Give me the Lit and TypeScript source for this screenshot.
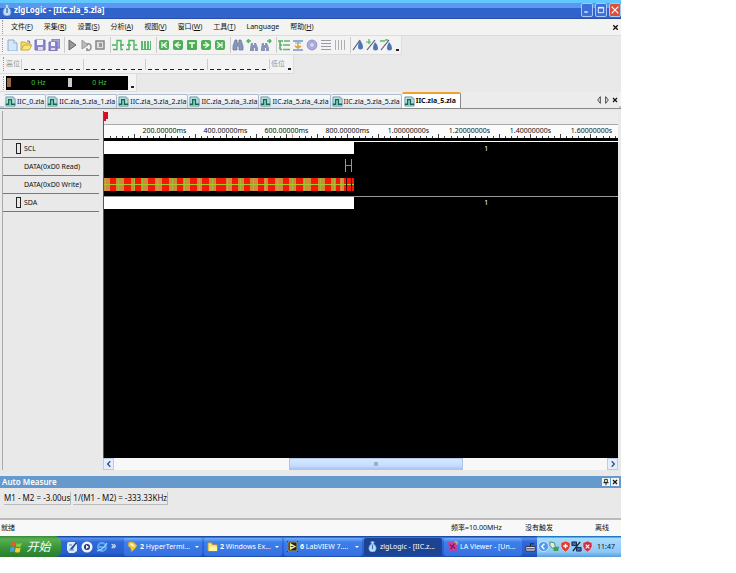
import { LitElement, html, css, svg, nothing } from "lit";
import { customElement, property, state } from "lit/decorators.js";
import { classMap } from "lit/directives/class-map.js";

const glyphs: Record<string, unknown> = {
  fresh: svg`<path d="M2 1h6l3 3v8H2z" fill="#d3e9fb" stroke="#8cacd0"/><path d="M8 1v3h3" fill="#fff" stroke="#8cacd0"/>`,
  open: svg`<path d="M1 11V3h4l1 1h4v2" fill="#f3dc6c" stroke="#c8a83c"/><path d="M1 11l3-5h8l-3 5z" fill="#f8e878" stroke="#c8a83c"/><path d="M7 2q3-1 3 2" fill="none" stroke="#66a"/>`,
  save: svg`<path d="M1 1h10v10H1z" fill="#8b86cc" stroke="#7471b8"/><path d="M3 1h6v5H3z" fill="#f4f4fb"/><path d="M4 8h5v3H4z" fill="#ddd"/>`,
  saveAll: svg`<path d="M4 0h8v9H4z" fill="#aaa6dc" stroke="#7471b8"/><path d="M1 3h8v9H1z" fill="#8b86cc" stroke="#7471b8"/><path d="M3 3h4v4H3z" fill="#f4f4fb"/><path d="M3 9h4v2H3z" fill="#ddd"/>`,
  play: svg`<path d="M3 1l7 5-7 5z" fill="#9a9a9a" stroke="#666"/>`,
  loop: svg`<path d="M2 1l6 5-6 4z" fill="#bbb" stroke="#999"/><path d="M7 5q4-1 4 3t-4 3m0-2v3" fill="none" stroke="#888" stroke-width="1.4"/>`,
  stop: svg`<path d="M2 2h8v8H2z" fill="#ddd" stroke="#888" stroke-width="1.5"/><path d="M5 4h3v4H5z" fill="#999"/>`,
  pulseA: svg`<path d="M1 10.500h4v-9h4v9h2" fill="none" stroke="#4cb45c" stroke-width="1.400"/><path d="M0 6h4M8 6h4" stroke="#4cb45c" stroke-width="1.400"/>`,
  pulseB: svg`<path d="M0 10.500h3v-9h5v9h4" fill="none" stroke="#4cb45c" stroke-width="1.400"/><path d="M1 6h4M9 6h2" stroke="#4cb45c" stroke-width="1.400"/>`,
  pulseC: svg`<path d="M1 2h2v8H1zM4 2h2v8H4zM7 2h2v8H7zM10 2h1v8h-1z" fill="#5cbc6c"/><path d="M1 10.500h10" stroke="#4cb45c"/>`,
  goFirst: svg`<rect x="1" y="1" width="10" height="10" rx="2" fill="#4fae55"/><path d="M4 3v6M9 3L5 6l4 3M6 6h3" fill="none" stroke="#eaffea" stroke-width="1.2"/>`,
  goPrev: svg`<rect x="1" y="1" width="10" height="10" rx="2" fill="#4fae55"/><path d="M7 3L3 6l4 3M4 6h5" fill="none" stroke="#eaffea" stroke-width="1.3"/>`,
  goTrig: svg`<rect x="1" y="1" width="10" height="10" rx="1" fill="#4fae55"/><path d="M3 4h6M6 4v5" fill="none" stroke="#eaffea" stroke-width="1.5"/>`,
  goNext: svg`<rect x="1" y="1" width="10" height="10" rx="2" fill="#4fae55"/><path d="M5 3l4 3-4 3M3 6h5" fill="none" stroke="#eaffea" stroke-width="1.3"/>`,
  goLast: svg`<rect x="1" y="1" width="10" height="10" rx="2" fill="#4fae55"/><path d="M8 3v6M3 3l4 3-4 3M3 6h3" fill="none" stroke="#eaffea" stroke-width="1.2"/>`,
  find: svg`<path d="M3 1h2v3h2V1h2l2 6v4H7V7H5v4H1V7z" fill="#8a96b8" stroke="#66749c" stroke-width=".7"/>`,
  findPrev: svg`<path d="M5 4h2v2h1V4h2l2 5v3H9V9H8v3H4V9z" fill="#8a96b8"/><path d="M5 2H1m2-2L1 2l2 2" fill="none" stroke="#4cb45c" stroke-width="1.3"/>`,
  findNext: svg`<path d="M2 4h2v2h1V4h2l2 5v3H6V9H5v3H1V9z" fill="#8a96b8"/><path d="M7 2h4M9 0l2 2-2 2" fill="none" stroke="#4cb45c" stroke-width="1.3"/>`,
  tree: svg`<path d="M0 2h5M2 2v8.500M2 6h2M2 10.500h2" fill="none" stroke="#4cb45c" stroke-width="1.600"/><path d="M6 2h6M5 6h7M5 10.500h7" stroke="#6cb070" stroke-width="1.300"/>`,
  insert: svg`<path d="M1 2h10M1 11h10" stroke="#6f96cc" stroke-width="1.6"/><path d="M6 3v6M3 7l3 2 3-2" fill="none" stroke="#e0a040" stroke-width="1.6"/><path d="M3 4h6" stroke="#7fb0dc"/>`,
  gear: svg`<circle cx="6" cy="6" r="4.6" fill="#b4b4e4" stroke="#9c9cd0" stroke-width="1.6"/><circle cx="6" cy="6" r="2.4" fill="#dcdcf4" stroke="#9a9ad0"/>`,
  lines: svg`<path d="M1 1.500h10M1 4.500h10M1 7.500h10M1 10.500h10" stroke="#9a9aa6"/>`,
  bars: svg`<path d="M1.500 1v10M4.500 1v10M7.500 1v10M10.500 1v10" stroke="#b0b0b0"/>`,
  probe: svg`<path d="M1 11L8 1" stroke="#557" stroke-width="1.2"/><path d="M8 1q3 4 3 7a2.4 2.4 0 0 1-5 0q0-3 2-7z" fill="#4a78b4"/>`,
  probeAdd: svg`<path d="M1 11L9 1" stroke="#557" stroke-width="1.2"/><path d="M9 3q3 3 3 6a2.3 2.3 0 0 1-5 0q0-3 2-6z" fill="#4a78b4"/><path d="M3 0v5M0 3h5" stroke="#4cb45c" stroke-width="1.2"/>`,
  probeDel: svg`<path d="M1 11L9 1" stroke="#557" stroke-width="1.2"/><path d="M9 3q3 3 3 6a2.3 2.3 0 0 1-5 0q0-3 2-6z" fill="#4a78b4"/><path d="M0 2h5M5 1l3 0" stroke="#58b868" stroke-width="1.4"/>`,
  wave: svg`<path d="M1 1h8l2 2v8H1z" fill="#b4dcdc" stroke="#6898ac"/><path d="M1 9h3V4h3v5h4" fill="none" stroke="#0c6c48" stroke-width="1.500"/><path d="M9 1v2h2" fill="#fff" stroke="#6898ac" stroke-width=".7"/>`,
  logo: svg`<path d="M4 1q2-1 4 0l-1 2q3 2 3 5 0 4-4 4t-4-4q0-3 3-5z" fill="#c4e0f8" stroke="#6c9cd8" stroke-width=".8"/><path d="M6 4v5" stroke="#3c74c0" stroke-width="1.400"/>`,
  winflag: svg`<path d="M1 3q2-2 4-.5L4.400 6Q2 5 .5 6z" fill="#f0582c"/><path d="M6 3q2 1 5-.5L10 6Q8 7 5.500 6z" fill="#86cc3c"/><path d="M.5 7q2-1 3.800 0L3.500 11Q2 10 0 11z" fill="#4c9cf0"/><path d="M5.300 7q2 1 4.500 0L9 11q-2 1-4.500 0z" fill="#f8cc34"/>`,
  ie: svg`<circle cx="6" cy="6" r="4" fill="none" stroke="#54acf8" stroke-width="2"/><path d="M3 6h6M1 10q6-1 10-8" fill="none" stroke="#a4d8ff" stroke-width="1.2"/>`,
  desktop: svg`<path d="M2 1h7l2 3v6l-3 2H3L1 9V3z" fill="#d8ecff"/><path d="M4 8l6-7 1 1-5 7z" fill="#2c4c80"/><path d="M3 4h3M3 9h5" stroke="#5080b8"/>`,
  media: svg`<circle cx="6" cy="6" r="5.500" fill="#f0f4fa"/><circle cx="6" cy="6" r="3" fill="#203c70"/><path d="M5 4l3 2-3 2z" fill="#fff"/>`,
  phone: svg`<path d="M2 1l5 0 4 4-2 3-4 4-1-4-3-3z" fill="#f0cc40" stroke="#b89028" stroke-width=".7"/><path d="M4 3l4 3" stroke="#fff" stroke-width="1.400"/>`,
  folder: svg`<path d="M1 11V2h4l1 2h5v7z" fill="#f8e470" stroke="#b89028" stroke-width=".8"/><path d="M3 6h8v5H2z" fill="#fff4a0"/>`,
  labview: svg`<path d="M0 0h12v12H0z" fill="#222"/><path d="M1 1h10v10H1z" fill="none" stroke="#c8c8a8"/><path d="M3 2l7 4-7 4z" fill="#f8e880"/><path d="M4 6h3" stroke="#333"/>`,
  viewer: svg`<path d="M1 1l4 1 3-2 4 4-2 3 2 4-5-1-5 2 0-5z" fill="#d83890"/><path d="M3 4l6 4M8 3L4 9" stroke="#501870" stroke-width="1.200"/><path d="M8 1h3v3" stroke="#f0e050" fill="none"/>`,
  keyboard: svg`<path d="M1 6h10v5H1z" fill="#dde" stroke="#334"/><path d="M2 8.500h8M6 6V3h4" fill="none" stroke="#223"/>`,
  chevron: svg`<circle cx="6" cy="6" r="5.500" fill="#4c98f4" stroke="#d0e8ff"/><path d="M7 3L4 6l3 3" fill="none" stroke="#fff" stroke-width="1.500"/>`,
  usb: svg`<path d="M1 1l5 1 1 5-3 1-3-3z" fill="#e0ecd8" stroke="#486"/><path d="M5 7l6-1-1 5H5z" fill="#3ca04c"/>`,
  shield: svg`<path d="M6 0l5 2v4q-1 4-5 6-4-2-5-6V2z" fill="#dc3c30" stroke="#fbd8d0" stroke-width=".7"/><path d="M6 3v5M3.500 5.500h5" stroke="#fff" stroke-width="1.500"/>`,
  network: svg`<path d="M1 1h5v4H1zM6 7h5v4H6z" fill="#3c68b0" stroke="#124"/><path d="M2 11l8-10" stroke="#123" stroke-width="1.500"/>`,
  alert: svg`<path d="M6 0l5 2v4q-1 4-5 6-4-2-5-6V2z" fill="#c83048" stroke="#fbd8d0" stroke-width=".7"/><path d="M4 4l4 4M8 4L4 8" stroke="#fff" stroke-width="1.300"/>`,
  min: svg`<path d="M2 9h5" stroke="#fff" stroke-width="2"/>`,
  max: svg`<path d="M2 2h8v8H2zM2 3h8" fill="none" stroke="#fff" stroke-width="1.300"/>`,
  close: svg`<path d="M1 1l10 10M11 1L1 11" stroke="#fff" stroke-width="1.800"/>`,
  cross: svg`<path d="M3 3l6 6M9 3L3 9" stroke="#111" stroke-width="1.800"/>`,
  left: svg`<path d="M8 1L4 6l4 5z" fill="none" stroke="#222" stroke-width="1.200"/>`,
  right: svg`<path d="M4 1l4 5-4 5z" fill="none" stroke="#222" stroke-width="1.200"/>`,
  scrollLeft: svg`<path d="M8 2L4 6l4 4" fill="none" stroke="#34507c" stroke-width="2"/>`,
  scrollRight: svg`<path d="M4 2l4 4-4 4" fill="none" stroke="#34507c" stroke-width="2"/>`,
  pin: svg`<path d="M4 2h4v5H4zM2 7h8M6 7v4" fill="none" stroke="#111" stroke-width="1.300"/>`,
};

@customElement("ui-icon")
class UiIcon extends LitElement {
  @property() name = "";
  static styles = css`
    :host { display: block; flex: none; width: 12px; height: 12px; }
    svg { display: block; width: 100%; height: 100%; }
  `;
  render() {
    return html`<svg viewBox="0 0 12 12" aria-hidden="true">${glyphs[this.name] ?? nothing}</svg>`;
  }
}

const menus = [
  ["文件", "F"], ["采集", "R"], ["设置", "S"], ["分析", "A"],
  ["视图", "V"], ["窗口", "W"], ["工具", "T"], ["Language", ""], ["帮助", "H"],
];

const toolGroups = [
  ["fresh", "open", "save", "saveAll"],
  ["play", "loop", "stop"],
  ["pulseA", "pulseB", "pulseC"],
  ["goFirst", "goPrev", "goTrig", "goNext", "goLast"],
  ["find", "findPrev", "findNext"],
  ["tree", "insert", "gear", "lines", "bars"],
  ["probe", "probeAdd", "probeDel"],
];

const files = [
  "IIC_0.zla", "IIC.zla_5.zla_1.zla", "IIC.zla_5.zla_2.zla", "IIC.zla_5.zla_3.zla",
  "IIC.zla_5.zla_4.zla", "IIC.zla_5.zla_5.zla", "IIC.zla_5.zla",
];

const times = [
  "200.00000ms", "400.00000ms", "600.00000ms", "800.00000ms",
  "1.00000000s", "1.20000000s", "1.40000000s", "1.60000000s",
];

/* [start, width] of each byte group on the write bus */
const bursts = [
  [0, 6], [12, 8], [27, 4], [37, 7], [51, 7], [65, 8], [79, 7], [93, 5], [105, 7],
  [122, 6], [134, 6], [146, 8], [160, 4], [171, 8], [185, 7], [199, 8], [214, 7],
  [227, 5], [236, 4],
];

const tasks = [
  { icon: "phone", count: "2", label: "HyperTermi...", on: false },
  { icon: "folder", count: "2", label: "Windows Ex...", on: false },
  { icon: "labview", count: "6", label: "LabVIEW 7....", on: false },
  { icon: "logo", count: "", label: "zlgLogic - [IIC.z...", on: true },
  { icon: "viewer", count: "", label: "LA Viewer - [Un...", on: false },
];

@customElement("wave-view")
class WaveView extends LitElement {
  static styles = css`
    :host { display: flex; flex-direction: column; min-width: 0; background: #000; border-left: 1px solid #a03838; }
    .head { box-sizing: border-box; height: 14px; background: #ececec; border-bottom: 1px solid #aaa; }
    .flag { display: block; width: 4px; height: 12px; }
    .ruler { display: flex; flex-direction: column; height: 13px; background: #fbfbfb; overflow: hidden; }
    .times { display: flex; height: 9px; padding-left: 30px; font-size: 7px; line-height: 12px; }
    .times span { flex: 0 0 61px; text-align: center; }
    .ticks { display: block; width: 100%; height: 4px; }
    .cursor { stroke: #d88; }
    .wave { display: block; width: 100%; height: 75px; }
    .level { fill: #fff; font-size: 7px; }
  `;
  render() {
    const ticks = Array.from({ length: 120 }, (_, i) => i + 1);
    return html`
      <div class="head">
        <svg class="flag" viewBox="0 0 4 12"><path d="M0 1h4v7H2v2H0z" fill="#d80c20"/></svg>
      </div>
      <div class="ruler">
        <div class="times">${times.map((t) => html`<span>${t}</span>`)}</div>
        <svg class="ticks">
          ${ticks.map((i) => {
            const x = Math.round(i * 6.08);
            return svg`<rect x=${x} y=${i % 5 ? 2 : 0} width="1" height="4" fill="#444"/>`;
          })}
          <path class="cursor" d="M188.500 0v5"/>
        </svg>
      </div>
      <svg class="wave" role="img" aria-label="SCL / SDA">
        <rect y="3" width="100%" height="1" fill="#fff"/>
        <rect y="4" width="250" height="12" fill="#fff"/>
        <path d="M241.500 21v13M247.500 21v13" stroke="#f07850"/>
        <path d="M242 27.500h5" stroke="#58b838"/>
        <rect y="40" width="250" height="13" fill="#f41808"/>
        ${bursts.map(([x, w], i) => svg`
          <rect x=${x} y="40" width=${w} height="13" fill="#cc8c3c"/>
          <rect x=${x + (i % 3) + 1} y="40" width="1" height="13" fill="#a0b838"/>`)}
        <path d="M0 46.500h250" stroke="#a8c828"/>
        <path d="M242.500 40v13M247.500 40v13" stroke="#400"/>
        <rect y="58" width="100%" height="1" fill="#999"/>
        <rect y="59" width="250" height="12" fill="#fff"/>
        <text class="level" x="74%" y="13">1</text>
        <text class="level" x="74%" y="67">1</text>
      </svg>
    `;
  }
}

@customElement("app-root")
class AppRoot extends LitElement {
  @state() private current = 6;

  static styles = css`
    :host {
      display: block; box-sizing: border-box; height: 100vh; padding: 0 115px 16px 0; background: #fff;
      font-family: "Noto Sans", "Noto Sans CJK SC", sans-serif; font-size: 7px; line-height: 10px; color: #111;
    }
    button { display: flex; align-items: center; margin: 0; padding: 0; border: 0; background: none; font: inherit; color: inherit; white-space: nowrap; }
    .window { display: flex; flex-direction: column; height: 100%; background: #e9e9e9; }
    .title { display: flex; align-items: center; height: 19px; flex: none; padding: 0 0 0 1px; box-sizing: border-box; gap: 1px;
      background: linear-gradient(#60c8ff 0 3px, #5c98f0 3px 8px, #3064cc 8px 18px, #2850a8 18px); color: #fff; }
    .title h1 { flex: 1; margin: 0; font-size: 8px; line-height: 18px; font-weight: 700; }
    .caption { box-sizing: border-box; width: 12px; height: 14px; justify-content: center; border: 1px solid #a8c8f8; border-radius: 2px; background: #3c70d8; }
    .caption ui-icon { width: 8px; height: 8px; }
    .captions { display: flex; gap: 2px; }
    .quit { background: #d85038; }
    .bar { display: flex; flex: none; align-items: center; box-sizing: border-box; border-bottom: 1px solid #dcdcdc; }
    .grip { flex: none; width: 1px; height: 14px; margin: 0 1px; border-left: 1px dotted #999; }
    .menu { height: 17px; padding-left: 1px; background: #f3f3f1; }
    .menu nav { display: flex; flex: 1; gap: 11px; padding-left: 6px; }
    .shut { margin-right: 1px; }
    .shut ui-icon { width: 9px; height: 9px; }
    .tools { align-self: flex-start; height: 19px; padding-left: 1px; background: #f3f3f3; border-right: 1px solid #ddd; }
    .group { display: flex; margin-left: 3px; }
    .group + .group { border-left: 1px solid #ccc; }
    .tool { width: 14px; height: 16px; justify-content: center; }
    .grip + .group { margin-left: 0; }
    .more { width: 8px; align-self: flex-end; justify-content: center; height: 8px; }
    .more::before { content: ""; width: 3px; height: 2px; background: #222; }
    .bits, .meters { padding-left: 2px; }
    .bits span { color: #999; }
    .dashes { display: flex; justify-content: space-between; width: 56px; padding: 10px 2px 0 2px; margin-left: 1px; border-left: 1px solid #ccc; }
    .dashes i { width: 4px; height: 1px; background: #222; }
    .bits .low { margin-left: 1px; border-left: 1px solid #ccc; padding-left: 1px; }
    .meters { height: 18px; }
    .meter { display: flex; align-items: center; box-sizing: border-box; width: 61px; height: 14px; padding: 0 1px; background: #000; color: #3cc83c; }
    .meter span { flex: 1; text-align: center; }
    .meter::before { content: ""; width: 4px; height: 9px; background: #98684c; }
    .meter + .meter::before { background: #ccc; }
    .tabs { display: flex; flex: none; align-items: flex-end; height: 17px; box-sizing: border-box; padding: 0 2px 0 4px; background: linear-gradient(#f2f2f2 14px, #b4cce0 14px); border-bottom: 1px solid #888; overflow: hidden; }
    .tab { flex: none; height: 14px; box-sizing: border-box; gap: 1px; padding: 0 1px; background: linear-gradient(#fafafa, #d8e4f0); border: 1px solid #b0bccc; border-width: 1px 1px 0 0; border-radius: 2px 2px 0 0; }
    .tab ui-icon { width: 11px; height: 11px; }
    .tab.active { height: 16px; padding: 0 4px 0 2px; background: #fff; font-weight: 700; border-color: #888; border-top: 2px solid #f0a030; }
    .tabnav { display: flex; flex: 1; align-self: stretch; justify-content: flex-end; background: #ececec; }
    .tabnav ui-icon { width: 8px; height: 8px; }
    .work { display: flex; flex: 1; min-height: 120px; padding: 2px 3px 0 2px; }
    .names { flex: none; box-sizing: border-box; width: 99px; margin: 0 2px 0 0; padding: 0; list-style: none; border-left: 1px solid #aaa; }
    .names li { display: flex; align-items: center; box-sizing: border-box; height: 18px; margin-right: 2px; padding-left: 13px; gap: 3px; border-bottom: 1px solid #777; }
    .names .blank { height: 29px; }
    .box { box-sizing: border-box; width: 5px; height: 11px; border: 1px solid #222; }
    .names .bus { padding-left: 21px; }
    .plot { display: flex; flex: 1; flex-direction: column; min-width: 0; }
    wave-view { flex: 1; }
    .scroll { display: flex; flex: none; height: 12px; background: #f8f8f8; }
    .scroll button { width: 11px; justify-content: center; border: 1px solid #b8cce8; background: #e4eefc; box-sizing: border-box; }
    .scroll ui-icon { width: 8px; height: 8px; }
    .track { flex: 1; display: flex; padding: 0 28% 0 34%; }
    .thumb { flex: 1; display: flex; align-items: center; justify-content: center; background: linear-gradient(#d4e8ff, #c4dcfc 7px, #acc0f4); border: 1px solid #b0c4e4; }
    .thumb i { width: 4px; height: 4px; background: #9cb0c8; }
    .auto { flex: none; margin-top: 6px; border-bottom: 2px solid #bbb; }
    .auto header { display: flex; align-items: center; height: 12px; padding: 0 2px; gap: 1px; background: #6699cc; color: #fff; }
    .auto h2 { flex: 1; margin: 0; font-size: 8px; line-height: 12px; font-weight: 600; }
    .auto header button { background: #f4f4f4; }
    .auto header ui-icon { width: 8px; height: 8px; }
    .readings { display: flex; gap: 2px; height: 30px; padding: 4px; box-sizing: border-box; font-size: 8px; }
    .readings output { height: 12px; line-height: 12px; border: solid #bbb; border-width: 0 1px 1px 0; }
    .status { display: flex; flex: none; align-items: center; height: 16px; padding: 0 12px 0 1px; background: #f8f8f8; }
    .status span:first-child { flex: 1; }
    .freq { width: 74px; } .trig { width: 70px; }
    .taskbar { display: flex; flex: none; height: 21px; align-items: center; color: #fff;
      background: linear-gradient(#1c4ca8 0 1px, #5c94f0 2px, #3068d8 6px, #2860d0 17px, #1c48a8); }
    .start { width: 61px; height: 21px; justify-content: center; gap: 3px; border-radius: 0 6px 6px 0; font-size: 12px; font-style: italic;
      background: linear-gradient(#388838, #58b050 3px, #389438 12px, #2c7c2c); }
    .start ui-icon { width: 13px; height: 13px; }
    .quick { display: flex; width: 61px; padding-left: 5px; gap: 3px; box-sizing: border-box; align-items: center; }
    .quick span { align-self: flex-start; font-size: 10px; line-height: 8px; }
    .tasks { display: flex; flex: 1; min-width: 0; gap: 2px; padding-left: 2px; }
    .task { flex: 0 1 78px; min-width: 0; height: 18px; gap: 2px; padding: 0 3px; box-sizing: border-box; border-radius: 2px; background: linear-gradient(#78b0f8, #3c80ec 4px, #3470e0); }
    .task.on { background: #1c4494; }
    .task ui-icon { width: 11px; height: 11px; }
    .task span { flex: 1; text-align: left; }
    .task .drop { flex: none; width: 0; border: 2px solid transparent; border-top-color: #fff; border-bottom: 0; }
    .tray { display: flex; flex: none; height: 100%; align-items: center; color: #112; }
    .tray ui-icon { width: 11px; height: 11px; }
    .keys { padding-right: 1px; }
    .notify { display: flex; align-items: center; height: 100%; padding: 0 6px 0 1px; background: linear-gradient(#1c78c8 0 1px, #a8dcfc 2px, #8cc8f8 16px, #5c9cd8); }
    .notify time { padding-left: 4px; }
  `;

  render() {
    return html`
      <div class="window">
        <header class="title">
          <ui-icon name="logo"></ui-icon>
          <h1>zlgLogic - [IIC.zla_5.zla]</h1>
          <div class="captions">
            <button class="caption" aria-label="最小化"><ui-icon name="min"></ui-icon></button>
            <button class="caption" aria-label="最大化"><ui-icon name="max"></ui-icon></button>
            <button class="caption quit" aria-label="关闭"><ui-icon name="close"></ui-icon></button>
          </div>
        </header>
        <div class="bar menu">
          <div class="grip"></div>
          <nav>
            ${menus.map(([label, key]) => html`<button>${label}${key ? html`(<u>${key}</u>)` : nothing}</button>`)}
          </nav>
          <button class="shut" aria-label="关闭文档"><ui-icon name="cross"></ui-icon></button>
        </div>
        <div class="bar tools" role="toolbar">
          <span class="grip"></span>
          ${toolGroups.map((g) => html`<div class="group">
            ${g.map((n) => html`<button class="tool" aria-label=${n}><ui-icon name=${n}></ui-icon></button>`)}
          </div>`)}
          <button class="more" aria-label="more"></button>
        </div>
        <div class="bar tools bits">
          <span class="grip"></span>
          <span>高位</span>
          ${[0, 1, 2, 3].map(() => html`<div class="dashes">${Array.from({ length: 8 }, () => html`<i></i>`)}</div>`)}
          <span class="low">低位</span>
          <button class="more" aria-label="more"></button>
        </div>
        <div class="bar tools meters">
          <span class="grip"></span>
          <div class="meter"><span>0 Hz</span></div>
          <div class="meter"><span>0 Hz</span></div>
          <button class="more" aria-label="more"></button>
        </div>
        <div class="tabs" role="tablist">
          ${files.map((f, i) => html`<button role="tab" aria-selected=${i === this.current}
            class=${classMap({ tab: true, active: i === this.current })}
            @click=${() => { this.current = i; }}><ui-icon name="wave"></ui-icon>${f}</button>`)}
          <div class="tabnav">
            <button aria-label="上一个"><ui-icon name="left"></ui-icon></button>
            <button aria-label="下一个"><ui-icon name="right"></ui-icon></button>
            <button aria-label="关闭"><ui-icon name="cross"></ui-icon></button>
          </div>
        </div>
        <main class="work">
          <ul class="names">
            <li class="blank"></li>
            <li><i class="box"></i>SCL</li>
            <li class="bus">DATA(0xD0 Read)</li>
            <li class="bus">DATA(0xD0 Write)</li>
            <li><i class="box"></i>SDA</li>
          </ul>
          <div class="plot">
            <wave-view></wave-view>
            <div class="scroll">
              <button aria-label="向左"><ui-icon name="scrollLeft"></ui-icon></button>
              <div class="track"><div class="thumb"><i></i></div></div>
              <button aria-label="向右"><ui-icon name="scrollRight"></ui-icon></button>
            </div>
          </div>
        </main>
        <section class="auto">
          <header>
            <h2>Auto Measure</h2>
            <button aria-label="固定"><ui-icon name="pin"></ui-icon></button>
            <button aria-label="关闭"><ui-icon name="cross"></ui-icon></button>
          </header>
          <div class="readings">
            <output>M1 - M2 = -3.00us</output>
            <output>1/(M1 - M2) = -333.33KHz</output>
          </div>
        </section>
        <footer class="status">
          <span>就绪</span>
          <span class="freq">频率=10.00MHz</span>
          <span class="trig">没有触发</span>
          <span>离线</span>
        </footer>
        <div class="taskbar">
          <button class="start"><ui-icon name="winflag"></ui-icon>开始</button>
          <div class="quick">
            <button aria-label="桌面"><ui-icon name="desktop"></ui-icon></button>
            <button aria-label="播放器"><ui-icon name="media"></ui-icon></button>
            <button aria-label="浏览器"><ui-icon name="ie"></ui-icon></button>
            <span>»</span>
          </div>
          <div class="tasks">
            ${tasks.map((t) => html`<button class=${classMap({ task: true, on: t.on })}>
              <ui-icon name=${t.icon}></ui-icon>
              <span>${t.count ? html`<b>${t.count}</b> ` : nothing}${t.label}</span>
              ${t.count ? html`<i class="drop"></i>` : nothing}
            </button>`)}
          </div>
          <div class="tray">
            <ui-icon class="keys" name="keyboard"></ui-icon>
            <div class="notify">
              ${["chevron", "usb", "shield", "network", "alert"].map((n) => html`<ui-icon name=${n}></ui-icon>`)}
              <time>11:47</time>
            </div>
          </div>
        </div>
      </div>
    `;
  }
}
